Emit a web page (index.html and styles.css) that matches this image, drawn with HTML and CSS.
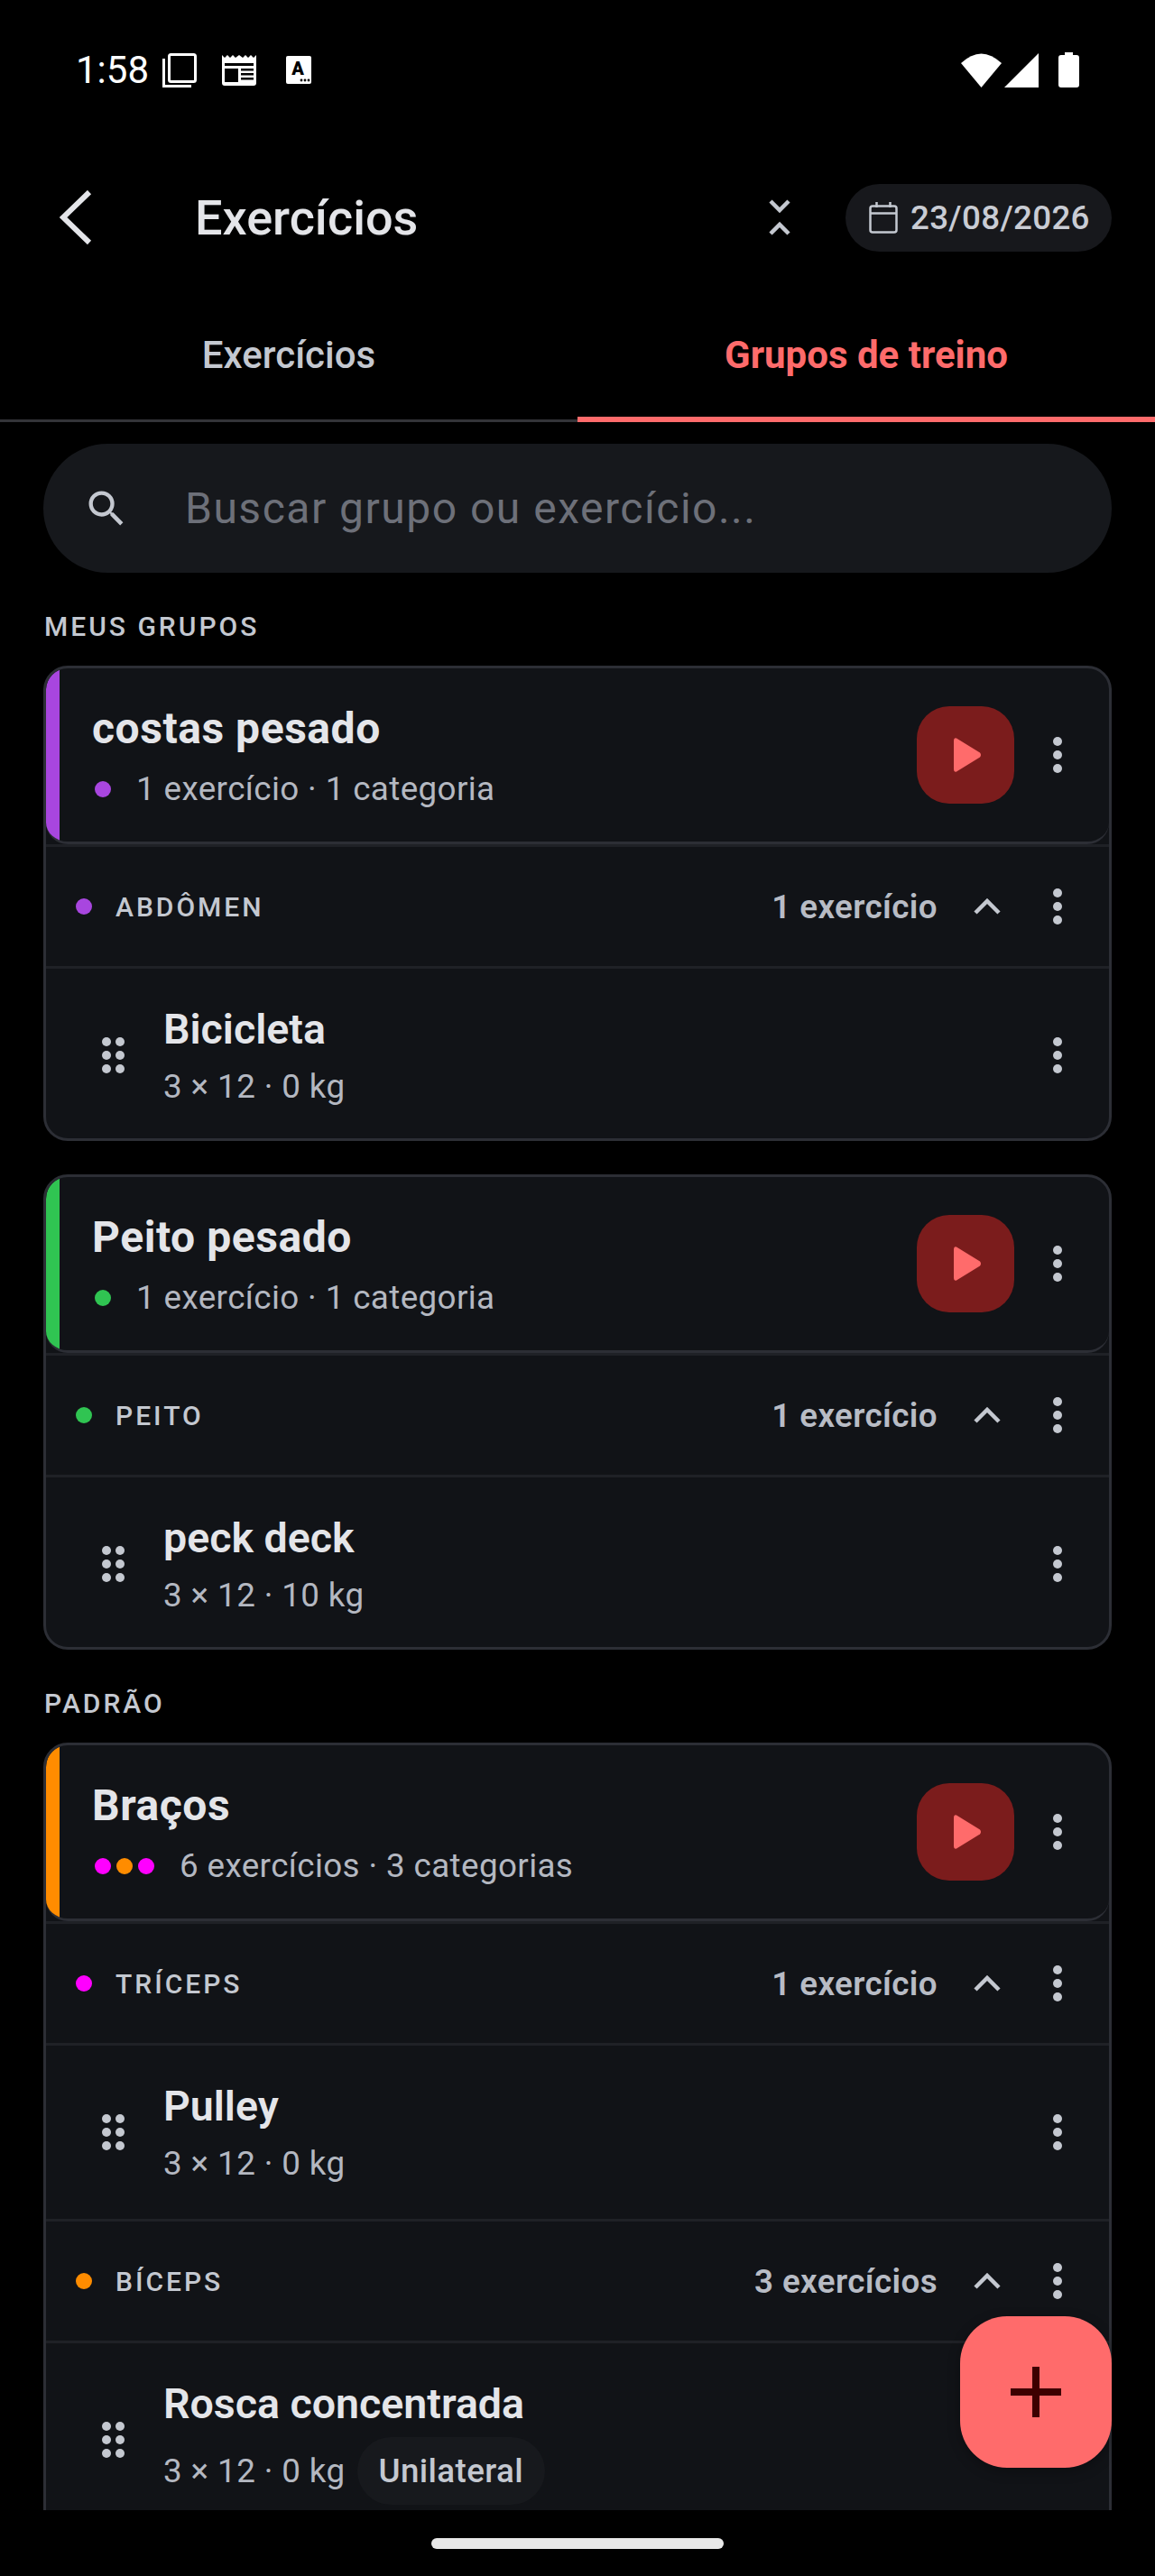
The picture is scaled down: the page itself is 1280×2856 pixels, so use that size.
FILE: index.html
```html
<!DOCTYPE html>
<html lang="pt-BR">
<head>
    <meta charset="UTF-8">
    <meta name="viewport" content="width=device-width, initial-scale=1.0">
    <title>Exercícios</title>
    <link rel="stylesheet" href="styles.css">
</head>
<body>
    <svg class="icon-defs" width="0" height="0">
        <symbol id="kebab" viewBox="0 0 10 40">
            <circle cx="5" cy="5" r="5"/><circle cx="5" cy="20" r="5"/><circle cx="5" cy="35" r="5"/>
        </symbol>
        <symbol id="drag" viewBox="0 0 25 40">
            <circle cx="5" cy="5" r="5"/><circle cx="20" cy="5" r="5"/>
            <circle cx="5" cy="20" r="5"/><circle cx="20" cy="20" r="5"/>
            <circle cx="5" cy="35" r="5"/><circle cx="20" cy="35" r="5"/>
        </symbol>
        <symbol id="chevron-up" viewBox="0 0 30 18">
            <path d="M2 16 L15 3 L28 16" fill="none" stroke="currentColor" stroke-width="4.5"/>
        </symbol>
        <symbol id="play" viewBox="0 0 30 38">
            <path d="M3 0.5 L29 16.5 Q31 19 29 21.5 L3 37.5 Q0 38.5 0 35 L0 3 Q0 -0.5 3 0.5 Z"/>
        </symbol>
    </svg>

    <div class="status-bar">
        <div class="status-left">
            <span class="clock">1:58</span>
            <svg class="st-copy" width="38" height="38" viewBox="0 0 38 38" fill="none" stroke="#fff" stroke-width="3">
                <rect x="7.5" y="1.5" width="29" height="30" rx="2"/>
                <path d="M1.5 6 V36.5 H32"/>
            </svg>
            <svg class="st-news" width="38" height="34" viewBox="0 0 38 34">
                <path fill="#fff" d="M0 0 L3 3 L6 0 L9 3 L12 0 L15 3 L19 0 L23 3 L26 0 L29 3 L32 0 L35 3 L38 0 V31 Q38 34 35 34 H3 Q0 34 0 31 Z"/>
                <rect fill="#000" x="3" y="9" width="32" height="3"/>
                <rect fill="#000" x="3" y="15" width="15" height="15"/>
                <rect fill="#000" x="21" y="15" width="14" height="2.5"/>
                <rect fill="#000" x="21" y="20" width="14" height="2.5"/>
                <rect fill="#000" x="21" y="25" width="14" height="2.5"/>
            </svg>
            <svg class="st-card" width="28" height="31" viewBox="0 0 28 31">
                <rect width="28" height="31" rx="2" fill="#fff"/>
                <text x="13" y="21" class="st-card-letter">A</text>
                <circle cx="17" cy="27" r="1.4"/><circle cx="21" cy="27" r="1.4"/><circle cx="25" cy="27" r="1.4"/>
            </svg>
        </div>
        <div class="status-right">
            <svg width="45" height="38" viewBox="0 0 45 38"><path fill="#fff" d="M0 11 Q22.500 -10 45 11 L22.500 38 Z"/></svg>
            <svg width="38" height="38" viewBox="0 0 38 38"><path fill="#fff" d="M38 0 V38 H0 Z"/></svg>
            <svg class="st-battery" width="23" height="39" viewBox="0 0 23 39"><path fill="#fff" d="M7 0 H16 V3 H20 Q23 3 23 6 V36 Q23 39 20 39 H3 Q0 39 0 36 V6 Q0 3 3 3 H7 Z"/></svg>
        </div>
    </div>

    <header class="app-bar">
        <svg class="back-icon" width="36" height="60" viewBox="0 0 36 60" fill="none" stroke="#e4e5e9" stroke-width="6">
            <path d="M33 2 L4 30 L33 58"/>
        </svg>
        <h1 class="app-title">Exercícios</h1>
        <svg class="collapse-icon" width="24" height="40" viewBox="0 0 24 40" fill="none" stroke="#c4c8d0" stroke-width="4.5">
            <path d="M2 2 L12 12 L22 2"/>
            <path d="M2 38 L12 28 L22 38"/>
        </svg>
        <div class="date-pill">
            <svg width="32" height="35" viewBox="0 0 32 35" fill="none" stroke="#c4c8d0" stroke-width="2.500">
                <rect x="1.500" y="4.500" width="29" height="29" rx="2.500"/>
                <path d="M1.500 12.500 H30.500 M8.500 0 V6 M23.500 0 V6"/>
            </svg>
            <span>23/08/2026</span>
        </div>
    </header>

    <nav class="tabs">
        <div class="tab">Exercícios</div>
        <div class="tab tab-active">Grupos de treino</div>
    </nav>

    <main class="scroll-area">
        <div class="search-box">
            <svg width="52" height="52" viewBox="0 0 24 24" fill="#c4c8d0">
                <path d="M15.500 14h-.79l-.28-.27A6.470 6.470 0 0 0 16 9.500 6.500 6.500 0 1 0 9.500 16c1.610 0 3.090-.59 4.230-1.570l.27.28v.79l5 4.990L20.490 19l-4.990-5zm-6 0C7.010 14 5 11.990 5 9.500S7.010 5 9.500 5 14 7.010 14 9.500 11.990 14 9.500 14z"/>
            </svg>
            <span class="search-placeholder">Buscar grupo ou exercício...</span>
        </div>

        <h2 class="section-label">MEUS GRUPOS</h2>

        <section class="group-card">
            <div class="group-head">
                <div class="stripe purple"></div>
                <div class="group-info">
                    <div class="group-name">costas pesado</div>
                    <div class="group-meta">
                        <span class="dots"><i class="dot purple"></i></span>
                        <span>1 exercício · 1 categoria</span>
                    </div>
                </div>
                <div class="play-btn"><svg width="30" height="38"><use href="#play"/></svg></div>
                <svg class="kebab" width="10" height="40"><use href="#kebab"/></svg>
            </div>
            <div class="cat-row">
                <i class="dot purple"></i>
                <span class="cat-name">ABDÔMEN</span>
                <span class="cat-count">1 exercício</span>
                <svg class="chevron" width="30" height="18"><use href="#chevron-up"/></svg>
                <svg class="kebab" width="10" height="40"><use href="#kebab"/></svg>
            </div>
            <div class="ex-row">
                <svg class="drag" width="25" height="40"><use href="#drag"/></svg>
                <div class="ex-info">
                    <div class="ex-name">Bicicleta</div>
                    <div class="ex-meta"><span>3 × 12 · 0 kg</span></div>
                </div>
                <svg class="kebab" width="10" height="40"><use href="#kebab"/></svg>
            </div>
        </section>

        <section class="group-card">
            <div class="group-head">
                <div class="stripe green"></div>
                <div class="group-info">
                    <div class="group-name">Peito pesado</div>
                    <div class="group-meta">
                        <span class="dots"><i class="dot green"></i></span>
                        <span>1 exercício · 1 categoria</span>
                    </div>
                </div>
                <div class="play-btn"><svg width="30" height="38"><use href="#play"/></svg></div>
                <svg class="kebab" width="10" height="40"><use href="#kebab"/></svg>
            </div>
            <div class="cat-row">
                <i class="dot green"></i>
                <span class="cat-name">PEITO</span>
                <span class="cat-count">1 exercício</span>
                <svg class="chevron" width="30" height="18"><use href="#chevron-up"/></svg>
                <svg class="kebab" width="10" height="40"><use href="#kebab"/></svg>
            </div>
            <div class="ex-row">
                <svg class="drag" width="25" height="40"><use href="#drag"/></svg>
                <div class="ex-info">
                    <div class="ex-name">peck deck</div>
                    <div class="ex-meta"><span>3 × 12 · 10 kg</span></div>
                </div>
                <svg class="kebab" width="10" height="40"><use href="#kebab"/></svg>
            </div>
        </section>

        <h2 class="section-label">PADRÃO</h2>

        <section class="group-card">
            <div class="group-head">
                <div class="stripe orange"></div>
                <div class="group-info">
                    <div class="group-name">Braços</div>
                    <div class="group-meta">
                        <span class="dots"><i class="dot magenta"></i><i class="dot orange"></i><i class="dot magenta"></i></span>
                        <span>6 exercícios · 3 categorias</span>
                    </div>
                </div>
                <div class="play-btn"><svg width="30" height="38"><use href="#play"/></svg></div>
                <svg class="kebab" width="10" height="40"><use href="#kebab"/></svg>
            </div>
            <div class="cat-row">
                <i class="dot magenta"></i>
                <span class="cat-name">TRÍCEPS</span>
                <span class="cat-count">1 exercício</span>
                <svg class="chevron" width="30" height="18"><use href="#chevron-up"/></svg>
                <svg class="kebab" width="10" height="40"><use href="#kebab"/></svg>
            </div>
            <div class="ex-row">
                <svg class="drag" width="25" height="40"><use href="#drag"/></svg>
                <div class="ex-info">
                    <div class="ex-name">Pulley</div>
                    <div class="ex-meta"><span>3 × 12 · 0 kg</span></div>
                </div>
                <svg class="kebab" width="10" height="40"><use href="#kebab"/></svg>
            </div>
            <div class="cat-row">
                <i class="dot orange"></i>
                <span class="cat-name">BÍCEPS</span>
                <span class="cat-count">3 exercícios</span>
                <svg class="chevron" width="30" height="18"><use href="#chevron-up"/></svg>
                <svg class="kebab" width="10" height="40"><use href="#kebab"/></svg>
            </div>
            <div class="ex-row">
                <svg class="drag" width="25" height="40"><use href="#drag"/></svg>
                <div class="ex-info">
                    <div class="ex-name">Rosca concentrada</div>
                    <div class="ex-meta"><span>3 × 12 · 0 kg</span><span class="chip">Unilateral</span></div>
                </div>
                <svg class="kebab" width="10" height="40"><use href="#kebab"/></svg>
            </div>
        </section>
    </main>

    <div class="home-area"><div class="home-bar"></div></div>

    <button class="fab">
        <svg width="56" height="56" viewBox="0 0 56 56" fill="#3d0000"><path d="M24 0 H32 V24 H56 V32 H32 V56 H24 V32 H0 V24 H24 Z"/></svg>
    </button>
</body>
</html>
```

FILE: styles.css
```css
* {
    box-sizing: border-box;
}
html, body {
    margin: 0;
    height: 2856px;
}
body {
    position: relative;
    display: flex;
    flex-direction: column;
    overflow: hidden;
    background-color: #000;
    color: #e4e5e9;
    font-family: Roboto, "Liberation Sans", sans-serif;
}
.icon-defs {
    position: absolute;
}
svg {
    display: block;
    flex-shrink: 0;
}

/* status bar */
.status-bar {
    height: 165px;
    flex-shrink: 0;
    display: flex;
    justify-content: space-between;
    align-items: flex-start;
    padding: 58px 84px 0 84px;
}
.status-left {
    display: flex;
    align-items: center;
    height: 39px;
}
.clock {
    font-size: 42px;
    line-height: 39px;
    color: #fff;
    width: 96px;
}
.st-news {
    margin-left: 28px;
}
.st-card {
    margin-left: 33px;
}
.st-card-letter {
    font-size: 20px;
    font-weight: 900;
    text-anchor: middle;
}
.status-right {
    display: flex;
    align-items: center;
    height: 39px;
    gap: 3px;
}
.st-battery {
    margin-left: 19px;
}

/* top bar */
.app-bar {
    height: 152px;
    flex-shrink: 0;
    display: flex;
    align-items: center;
    padding: 0 48px 0 66px;
}
.app-title {
    margin: 0 0 0 114px;
    flex: 1;
    font-size: 54px;
    font-weight: 500;
    color: #e4e5e9;
}
.collapse-icon {
    margin-right: 61px;
}
.date-pill {
    display: flex;
    align-items: center;
    gap: 14px;
    width: 295px;
    height: 75px;
    padding-left: 26px;
    border-radius: 38px;
    background-color: #17181c;
    color: #c9ccd4;
    font-size: 36.75px;
    letter-spacing: 0.3px;
    font-weight: 500;
}

/* tabs */
.tabs {
    height: 151px;
    flex-shrink: 0;
    display: flex;
    border-bottom: 3px solid #333438;
}
.tab {
    flex: 1;
    height: 151px;
    display: flex;
    align-items: center;
    justify-content: center;
    padding-top: 7px;
    border-bottom: 6px solid transparent;
    font-size: 42px;
    font-weight: 500;
    color: #c4c8d0;
}
.tab-active {
    color: #ff6b6b;
    font-weight: 700;
    border-bottom-color: #ff6b6b;
}

/* list */
.scroll-area {
    height: 2315px;
    flex-shrink: 0;
    overflow: hidden;
    padding: 24px 48px 0;
}
.search-box {
    height: 143px;
    display: flex;
    align-items: center;
    gap: 61px;
    padding-left: 44px;
    margin-bottom: 42px;
    border-radius: 72px;
    background-color: #16181c;
}
.search-placeholder {
    font-size: 48px;
    letter-spacing: 1.5px;
    color: #6d7079;
}
.section-label {
    margin: 0 0 25px 1px;
    font-size: 30px;
    line-height: 36px;
    font-weight: 500;
    letter-spacing: 3px;
    color: #c4c8d0;
}
.group-card + .section-label {
    margin-top: 42px;
}
.group-card {
    margin-bottom: 37px;
    border: 3px solid #2c2e35;
    border-radius: 27px;
    background-color: #111317;
    overflow: hidden;
}
.group-head {
    height: 195px;
    display: flex;
    align-items: center;
    border-bottom: 3px solid #2c2e35;
    border-radius: 24px;
    overflow: hidden;
    padding-right: 52px;
}
.stripe {
    width: 15px;
    align-self: stretch;
}
.purple { background-color: #a846df; }
.green { background-color: #30c452; }
.orange { background-color: #ff8c00; }
.magenta { background-color: #ff00ff; }

.group-info {
    flex: 1;
    padding: 4px 0 0 36px;
}
.group-name {
    font-size: 48px;
    line-height: 54px;
    font-weight: 700;
    letter-spacing: 0.55px;
    color: #e4e5e9;
}
.group-meta {
    display: flex;
    align-items: center;
    gap: 28px;
    margin-top: 18px;
    font-size: 36.75px;
    letter-spacing: 0.4px;
    line-height: 44px;
    color: #b4b8c1;
}
.dots {
    display: flex;
    gap: 6px;
    padding-left: 3px;
}
.dot {
    width: 18px;
    height: 18px;
    border-radius: 50%;
    flex-shrink: 0;
}
.play-btn {
    width: 108px;
    height: 108px;
    display: flex;
    align-items: center;
    justify-content: center;
    margin-right: 43px;
    padding-left: 3px;
    border-radius: 36px;
    background-color: #7b1c1c;
    fill: #ff6b6b;
}
.kebab, .drag {
    fill: #c4c8d0;
}
.cat-row {
    height: 135px;
    display: flex;
    align-items: center;
    border-top: 3px solid #1f2126;
    padding: 0 52px 0 33px;
}
.cat-name {
    flex: 1;
    margin-left: 26px;
    font-size: 30px;
    font-weight: 500;
    letter-spacing: 3px;
    color: #c4c8d0;
}
.cat-count {
    font-size: 36.75px;
    letter-spacing: 0.4px;
    font-weight: 600;
    color: #b8bcc5;
}
.chevron {
    margin: 0 58px 0 40px;
    color: #c4c8d0;
}
.ex-row {
    display: flex;
    align-items: center;
    border-top: 3px solid #1f2126;
    padding: 35px 52px 35px 62px;
}
.ex-row:last-child {
    margin-bottom: -4px;
}
.ex-info {
    flex: 1;
    margin-left: 43px;
    padding-top: 5px;
}
.ex-name {
    font-size: 46.5px;
    line-height: 54px;
    font-weight: 600;
    color: #e4e5e9;
}
.ex-meta {
    display: flex;
    align-items: center;
    gap: 13px;
    margin-top: 10px;
    font-size: 36.75px;
    letter-spacing: 0.4px;
    line-height: 53px;
    color: #b4b8c1;
}
.chip {
    height: 75px;
    display: flex;
    align-items: center;
    padding: 0 24px;
    border-radius: 38px;
    background-color: #17191d;
    font-weight: 500;
    color: #c4c8d0;
}

/* bottom */
.home-area {
    flex: 1;
    padding-top: 31px;
}
.home-bar {
    width: 324px;
    height: 12px;
    margin: 0 auto;
    border-radius: 6px;
    background-color: #e8e8e8;
}
.fab {
    position: absolute;
    left: 1064px;
    top: 2568px;
    width: 168px;
    height: 168px;
    display: flex;
    align-items: center;
    justify-content: center;
    padding: 0;
    border: none;
    border-radius: 52px;
    background-color: #ff6b6b;
    box-shadow: 0 4px 14px rgba(0,0,0,0.3);
}
```
